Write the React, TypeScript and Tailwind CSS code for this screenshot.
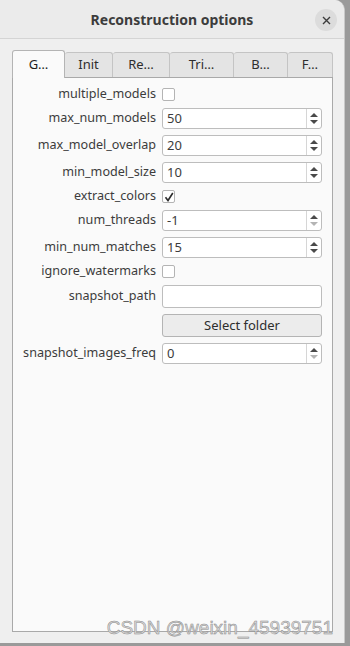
import React from "react";

const font = { fontFamily: '"Noto Sans", "DejaVu Sans", sans-serif' };

function SpinBox(props: { value: string; downDisabled?: boolean }) {
  const { value, downDisabled } = props;
  return (
    <div className="flex h-[21px] w-[160px] items-stretch rounded-[3px] border border-[#bdbdbd] bg-white">
      <div className="flex flex-1 items-center pl-[4px] text-[13px] text-[#3c3c3c]">{value}</div>
      <div className="flex w-[15px] flex-col items-center justify-center gap-[3px] border-l border-[#d6d6d6]">
        <svg width="8" height="4" viewBox="0 0 8 4">
          <path d="M0 4 L4 0 L8 4 Z" fill="#4a4a4a" />
        </svg>
        <svg width="8" height="4" viewBox="0 0 8 4">
          <path d="M0 0 L4 4 L8 0 Z" fill={downDisabled ? "#b4b4b4" : "#4a4a4a"} />
        </svg>
      </div>
    </div>
  );
}

function CheckBox(props: { checked?: boolean }) {
  return (
    <div className="flex h-[13px] w-[13px] items-center justify-center rounded-[2px] border border-[#b4b4b4] bg-white">
      {props.checked && (
        <svg width="10" height="10" viewBox="0 0 10 10">
          <path d="M1.5 5.2 L4 8.5 L8.8 1" stroke="#2c2c2c" strokeWidth="1.6" fill="none" />
        </svg>
      )}
    </div>
  );
}

function Row(props: { label: string; h: string; children: React.ReactNode }) {
  return (
    <div className={`flex items-center ${props.h}`}>
      <div className="w-[149px] pr-[6px] text-right text-[12.6px] leading-none text-[#3c3c3c]">{props.label}</div>
      {props.children}
    </div>
  );
}

const tabs = [
  { name: "Init", w: "w-[48px]" },
  { name: "Re…", w: "w-[57px]" },
  { name: "Tri…", w: "w-[64px]" },
  { name: "B…", w: "w-[54px]" },
  { name: "F…", w: "w-[45px]" },
];

export default function App() {
  return (
    <div className="relative h-[646px] w-[350px] overflow-hidden bg-[#9a9a9a]" style={font}>
      <div className="flex h-[643px] w-[345px] flex-col rounded-tr-[10px] border-r border-[#c9c9c9] bg-[#efefef]">
        <header className="relative flex h-[39px] items-center justify-center rounded-tr-[10px] border-b border-[#d4d4d4] bg-[#ebebeb]">
          <div className="text-[14px] font-bold text-[#3c3c3c]">Reconstruction options</div>
          <div className="absolute right-[7px] top-[9px] flex h-[22px] w-[22px] items-center justify-center rounded-full bg-[#dcdcdc]">
            <svg width="9" height="9" viewBox="0 0 9 9">
              <path d="M1 1 L8 8 M8 1 L1 8" stroke="#3c3c3c" strokeWidth="1.4" />
            </svg>
          </div>
        </header>

        <div className="flex flex-1 flex-col pl-[12px] pr-[11px] pt-[11px]">
          {/* tab bar */}
          <div className="flex h-[27px] items-end">
            <div className="relative z-10 -mb-px flex h-[28px] w-[53px] items-center justify-center rounded-t-[3px] border border-b-0 border-[#b4b4b4] bg-[#fafafa] text-[13px] text-[#1e1e1e]">
              G…
            </div>
            {tabs.map((t) => (
              <div
                key={t.name}
                className={`flex h-[25px] ${t.w} items-center justify-center rounded-t-[3px] border border-l-0 border-b-0 border-[#c4c4c4] bg-[#e4e4e4] text-[13px] text-[#2e2e2e]`}
              >
                {t.name}
              </div>
            ))}
          </div>

          {/* page */}
          <div className="mb-[11px] flex flex-1 flex-col gap-[6px] border border-[#a9a9a9] bg-[#fafafa] pt-[9px]">
            <Row label="multiple_models" h="h-[15px]">
              <CheckBox />
            </Row>
            <Row label="max_num_models" h="h-[21px]">
              <SpinBox value="50" />
            </Row>
            <Row label="max_model_overlap" h="h-[21px]">
              <SpinBox value="20" />
            </Row>
            <Row label="min_model_size" h="h-[21px]">
              <SpinBox value="10" />
            </Row>
            <Row label="extract_colors" h="h-[15px]">
              <CheckBox checked />
            </Row>
            <Row label="num_threads" h="h-[21px]">
              <SpinBox value="-1" downDisabled />
            </Row>
            <Row label="min_num_matches" h="h-[21px]">
              <SpinBox value="15" />
            </Row>
            <Row label="ignore_watermarks" h="h-[15px]">
              <CheckBox />
            </Row>
            <Row label="snapshot_path" h="h-[23px]">
              <div className="h-[23px] w-[160px] rounded-[3px] border border-[#bdbdbd] bg-white" />
            </Row>
            <Row label="" h="h-[23px]">
              <div className="flex h-[23px] w-[160px] items-center justify-center rounded-[3px] border border-[#b4b4b4] bg-[#ececec] text-[13px] text-[#2e2e2e]">
                Select folder
              </div>
            </Row>
            <Row label="snapshot_images_freq" h="h-[21px]">
              <SpinBox value="0" downDisabled />
            </Row>
          </div>
        </div>
      </div>

      <div
        className="absolute right-[17px] top-[614px] text-[19px] text-[#dadada] [-webkit-text-stroke:0.5px_#8a8a8a]"
        style={{ fontFamily: '"Liberation Sans", Arial, sans-serif' }}
      >
        CSDN @weixin_45939751
      </div>
    </div>
  );
}
